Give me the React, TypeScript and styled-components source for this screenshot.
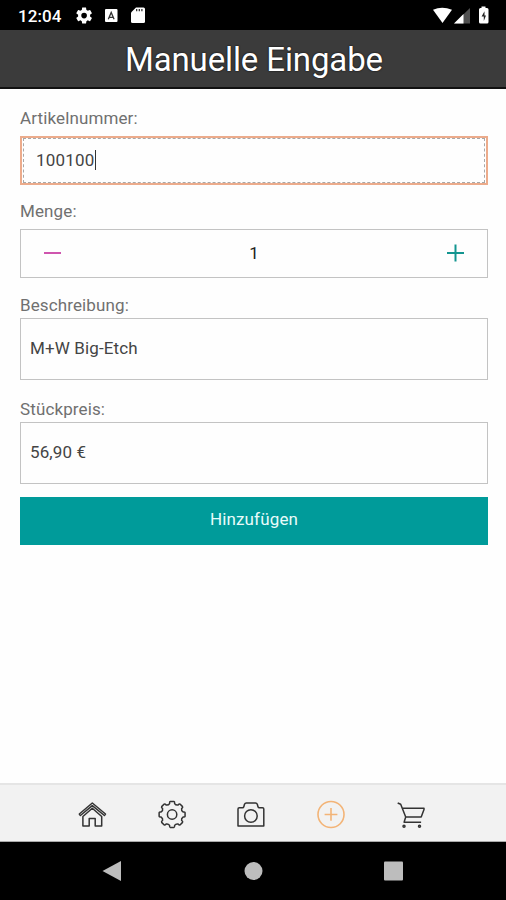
import React from "react";
import styled, { createGlobalStyle } from "styled-components";

const GlobalStyle = createGlobalStyle`
  *, *::before, *::after { box-sizing: border-box; }
  body { margin: 0; background: #fefefe; font-family: Roboto, "Liberation Sans", sans-serif; }
  svg { display: block; overflow: visible; }
`;

const Screen = styled.div`
  display: flex;
  flex-direction: column;
  width: 506px;
  height: 900px;
  overflow: hidden;
`;

const StatusBar = styled.header`
  display: flex;
  align-items: center;
  justify-content: space-between;
  flex: none;
  height: 30px;
  padding: 2px 15px 0 18px;
  background: #000;
  color: #fff;
`;

const StatusGroup = styled.div<{ $gap: number }>`
  display: flex;
  align-items: center;
  gap: ${(p) => p.$gap}px;
`;

const Clock = styled.span`
  width: 45px;
  font-size: 17px;
  font-weight: 500;
  line-height: 20px;
  letter-spacing: 0.1px;
  white-space: nowrap;
`;

const TitleBar = styled.div`
  flex: none;
  height: 59px;
  background: #3b3b3b;
  border-bottom: 2px solid #111;
  text-align: center;
`;

const Title = styled.h1`
  margin: 0;
  padding: 10px 0 0 2px;
  color: #fff;
  font-size: 33px;
  font-weight: 400;
  line-height: 40px;
  letter-spacing: -0.12px;
  text-shadow: 0 0 2px #000;
`;

const Form = styled.main`
  display: flex;
  flex-direction: column;
  flex: 1;
  padding: 19px 18px 0 20px;
  background: #fefefe;
`;

const Label = styled.label<{ $top?: number; $gap: number }>`
  margin-top: ${(p) => p.$top ?? 0}px;
  margin-bottom: ${(p) => p.$gap}px;
  color: #707070;
  font-size: 17px;
  line-height: 20px;
  letter-spacing: 0.12px;
`;

const FocusedField = styled.div`
  height: 49px;
  padding: 0 1px;
  border: 2px solid #ecab8b;
`;

const FieldInner = styled.div`
  display: flex;
  align-items: center;
  height: 100%;
  padding: 0 12px 2px;
  border: 1px dashed #a8a8a8;
  color: #444;
  font-size: 17px;
  line-height: 20px;
  letter-spacing: 0.2px;
`;

const Caret = styled.i`
  width: 1px;
  height: 20px;
  background: #333;
`;

const Stepper = styled.div`
  display: flex;
  align-items: center;
  justify-content: space-between;
  height: 49px;
  padding: 0 22px 1px;
  border: 1px solid #c3c3c3;
  color: #222;
  font-size: 17px;
`;

const ReadOnlyField = styled.div`
  height: 62px;
  padding: 19px 9px 0;
  border: 1px solid #c3c3c3;
  color: #444;
  font-size: 17px;
  line-height: 20px;
  letter-spacing: 0.12px;
`;

const SubmitButton = styled.button`
  height: 48px;
  margin-top: 13px;
  padding: 0 0 4px;
  border: 0;
  background: #009b9a;
  color: #e9fbfa;
  font-family: inherit;
  font-size: 17px;
  line-height: 20px;
  letter-spacing: 0.15px;
`;

const TabBar = styled.nav`
  display: flex;
  flex: none;
  gap: 51.7px;
  height: 59px;
  padding: 16px 0 0 78px;
  background: #f2f2f2;
  border-top: 2px solid #e5e5e5;
  border-bottom: 1px solid #aaa;
`;

const SystemNav = styled.footer`
  display: flex;
  flex: none;
  align-items: center;
  justify-content: space-between;
  height: 58px;
  padding: 0 102px;
  background: #000;
`;

const LineIcon = styled.svg<{ $active?: boolean }>`
  flex: none;
  width: 28px;
  height: 28px;
  fill: none;
  stroke: ${(p) => (p.$active ? "#f3b477" : "#333")};
  stroke-width: ${(p) => (p.$active ? 1.6 : 1.5)};
  stroke-linejoin: round;
`;

function gearPath(cx: number, cy: number, root: number, tip: number): string {
  const at = (degrees: number, radius: number) => {
    const angle = (degrees * Math.PI) / 180;
    return `${(cx + radius * Math.cos(angle)).toFixed(2)} ${(cy + radius * Math.sin(angle)).toFixed(2)}`;
  };
  let d = `M${at(-13, root + 0.6)}`;
  for (let i = 0; i < 8; i++) {
    const a = i * 45;
    d += `Q${at(a - 12, tip)} ${at(a - 8, tip)}L${at(a + 8, tip)}Q${at(a + 12, tip)} ${at(a + 13, root + 0.6)}Q${at(a + 22.5, root - 0.8)} ${at(a + 32, root + 0.6)}`;
  }
  return `${d}Z`;
}

const SettingsGlyph = () => (
  <svg width="18" height="18" viewBox="3 3 18 18" fill="#fff">
    <path d="M19.43 12.98c.04-.32.07-.64.07-.98s-.03-.66-.07-.98l2.11-1.65c.19-.15.24-.42.12-.64l-2-3.46c-.12-.22-.39-.3-.61-.22l-2.49 1c-.52-.4-1.08-.73-1.69-.98l-.38-2.65C14.46 2.18 14.25 2 14 2h-4c-.25 0-.46.18-.49.42l-.38 2.65c-.61.25-1.17.59-1.69.98l-2.49-1c-.23-.09-.49 0-.61.22l-2 3.46c-.13.22-.07.49.12.64l2.11 1.65c-.04.32-.07.65-.07.98s.03.66.07.98l-2.11 1.65c-.19.15-.24.42-.12.64l2 3.46c.12.22.39.3.61.22l2.49-1c.52.4 1.08.73 1.69.98l.38 2.65c.03.24.24.42.49.42h4c.25 0 .46-.18.49-.42l.38-2.65c.61-.25 1.17-.59 1.69-.98l2.49 1c.23.09.49 0 .61-.22l2-3.46c.12-.22.07-.49-.12-.64l-2.11-1.65zM12 15.5A3.5 3.5 0 1 1 12 8.5a3.5 3.5 0 0 1 0 7z" transform="translate(2.5 2) scale(.8)" />
  </svg>
);

export default function App() {
  return (
    <>
      <GlobalStyle />
      <Screen>
        <StatusBar>
          <StatusGroup $gap={12}>
            <Clock>12:04</Clock>
            <SettingsGlyph />
            <svg width="14" height="14" viewBox="0 0 14 14">
              <rect x="0" y="0" width="12.500" height="13" rx="1" fill="#fff" />
              <path d="M3.300 10.200L6.200 3.500l2.900 6.700M4.500 8.300h3.500" fill="none" stroke="#333" strokeWidth="1.300" />
            </svg>
            <svg width="14" height="17" viewBox="0 0 14 17">
              <path d="M5 -.5h7.500Q14 -.5 14 1v12.500q0 1.500-1.500 1.500h-11Q0 15 0 13.500V4.500z" fill="#fff" />
              <path d="M5.700 1v2.300M8.300 1v2.300M10.900 1v2.300" stroke="#222" strokeWidth="1.200" />
            </svg>
          </StatusGroup>
          <StatusGroup $gap={2}>
            <svg width="20" height="17" viewBox="0 0 20 17">
              <path d="M2 1.800Q11-2.500 21 1.800L11.500 15z" fill="#fff" />
            </svg>
            <svg width="17" height="17" viewBox="0 0 17 17">
              <path d="M1 15.500L17 0v15.500z" fill="#505050" />
              <path d="M1 15.500L10.500 6v9.500z" fill="#fff" />
            </svg>
            <svg width="19" height="18" viewBox="-7 0 19 18">
              <path d="M2.500 1V-.5h4V1h1.500q1.500 0 1.500 1.500v12.500q0 1.500-1.500 1.500H1.500Q0 16.500 0 15V2.500Q0 1 1.500 1z" fill="#fff" />
              <path d="M5.500 4.300L2.600 9.500h2.200v4.500l2.200-5.400H5.500z" fill="#222" />
            </svg>
          </StatusGroup>
        </StatusBar>
        <TitleBar>
          <Title>Manuelle Eingabe</Title>
        </TitleBar>
        <Form>
          <Label $gap={8}>Artikelnummer:</Label>
          <FocusedField>
            <FieldInner>100100<Caret /></FieldInner>
          </FocusedField>
          <Label $top={16} $gap={8}>Menge:</Label>
          <Stepper>
            <svg width="19" height="19" viewBox="0 0 19 19" fill="none" stroke="#cf55ae" strokeWidth="2">
              <path d="M1 9h17" />
            </svg>
            <span>1</span>
            <svg width="19" height="19" viewBox="0 0 19 19" fill="none" stroke="#139590" strokeWidth="2">
              <path d="M1 9h17M9.500 .5v17" />
            </svg>
          </Stepper>
          <Label $top={17} $gap={3}>Beschreibung:</Label>
          <ReadOnlyField>M+W Big-Etch</ReadOnlyField>
          <Label $top={19} $gap={3}>Stückpreis:</Label>
          <ReadOnlyField>56,90 €</ReadOnlyField>
          <SubmitButton>Hinzufügen</SubmitButton>
        </Form>
        <TabBar>
          <LineIcon viewBox="0 0 28 28">
            <path d="M1.300 13L14.300 2 27.500 13l-1.100 1.500L14.300 4.700 2.400 14.500z" />
            <path d="M4.900 15.500V24.900h6.300v-7.500h6v7.500h6.500V15.500L14.300 7.200z" />
          </LineIcon>
          <LineIcon viewBox="0 0 28 28">
            <path d={gearPath(14.1, 13.5, 10.6, 13.1)} />
            <circle cx="14.100" cy="13.500" r="4.700" />
          </LineIcon>
          <LineIcon viewBox="0 0 28 28">
            <path d="M1 8q0-1.300 1.300-1.300h3.200q1 0 1.300-1L7.500 3.300q.5-1.300 1.800-1.300h9.200q1.300 0 1.800 1.300l.7 2.400q.3 1 1.300 1h3.200q1.300 0 1.300 1.300V25H1z" />
            <circle cx="13.900" cy="15" r="6.300" />
          </LineIcon>
          <LineIcon viewBox="0 0 28 28" $active>
            <circle cx="14" cy="13.500" r="13" />
            <path d="M14 7v12.800M7.600 13.500h12.800" />
          </LineIcon>
          <LineIcon viewBox="0 0 28 28">
            <path d="M.7 2l3 1.300 5 12.700h15.500L27 8.500V7.300H5.300M8.700 16l-1.600 5.200h17" />
            <circle cx="7" cy="25.300" r="1" />
            <circle cx="22.500" cy="25.300" r="1" />
          </LineIcon>
        </TabBar>
        <SystemNav>
          <svg width="20" height="22" viewBox="0 0 20 22"><path d="M.5 11L19 1v20z" fill="#bdbdbd" /></svg>
          <svg width="20" height="20" viewBox="0 0 20 20"><circle cx="10.500" cy="10" r="9" fill="#bdbdbd" /></svg>
          <svg width="20" height="20" viewBox="0 0 20 20"><rect x="0" y=".5" width="19" height="19" rx="1" fill="#bdbdbd" /></svg>
        </SystemNav>
      </Screen>
    </>
  );
}
